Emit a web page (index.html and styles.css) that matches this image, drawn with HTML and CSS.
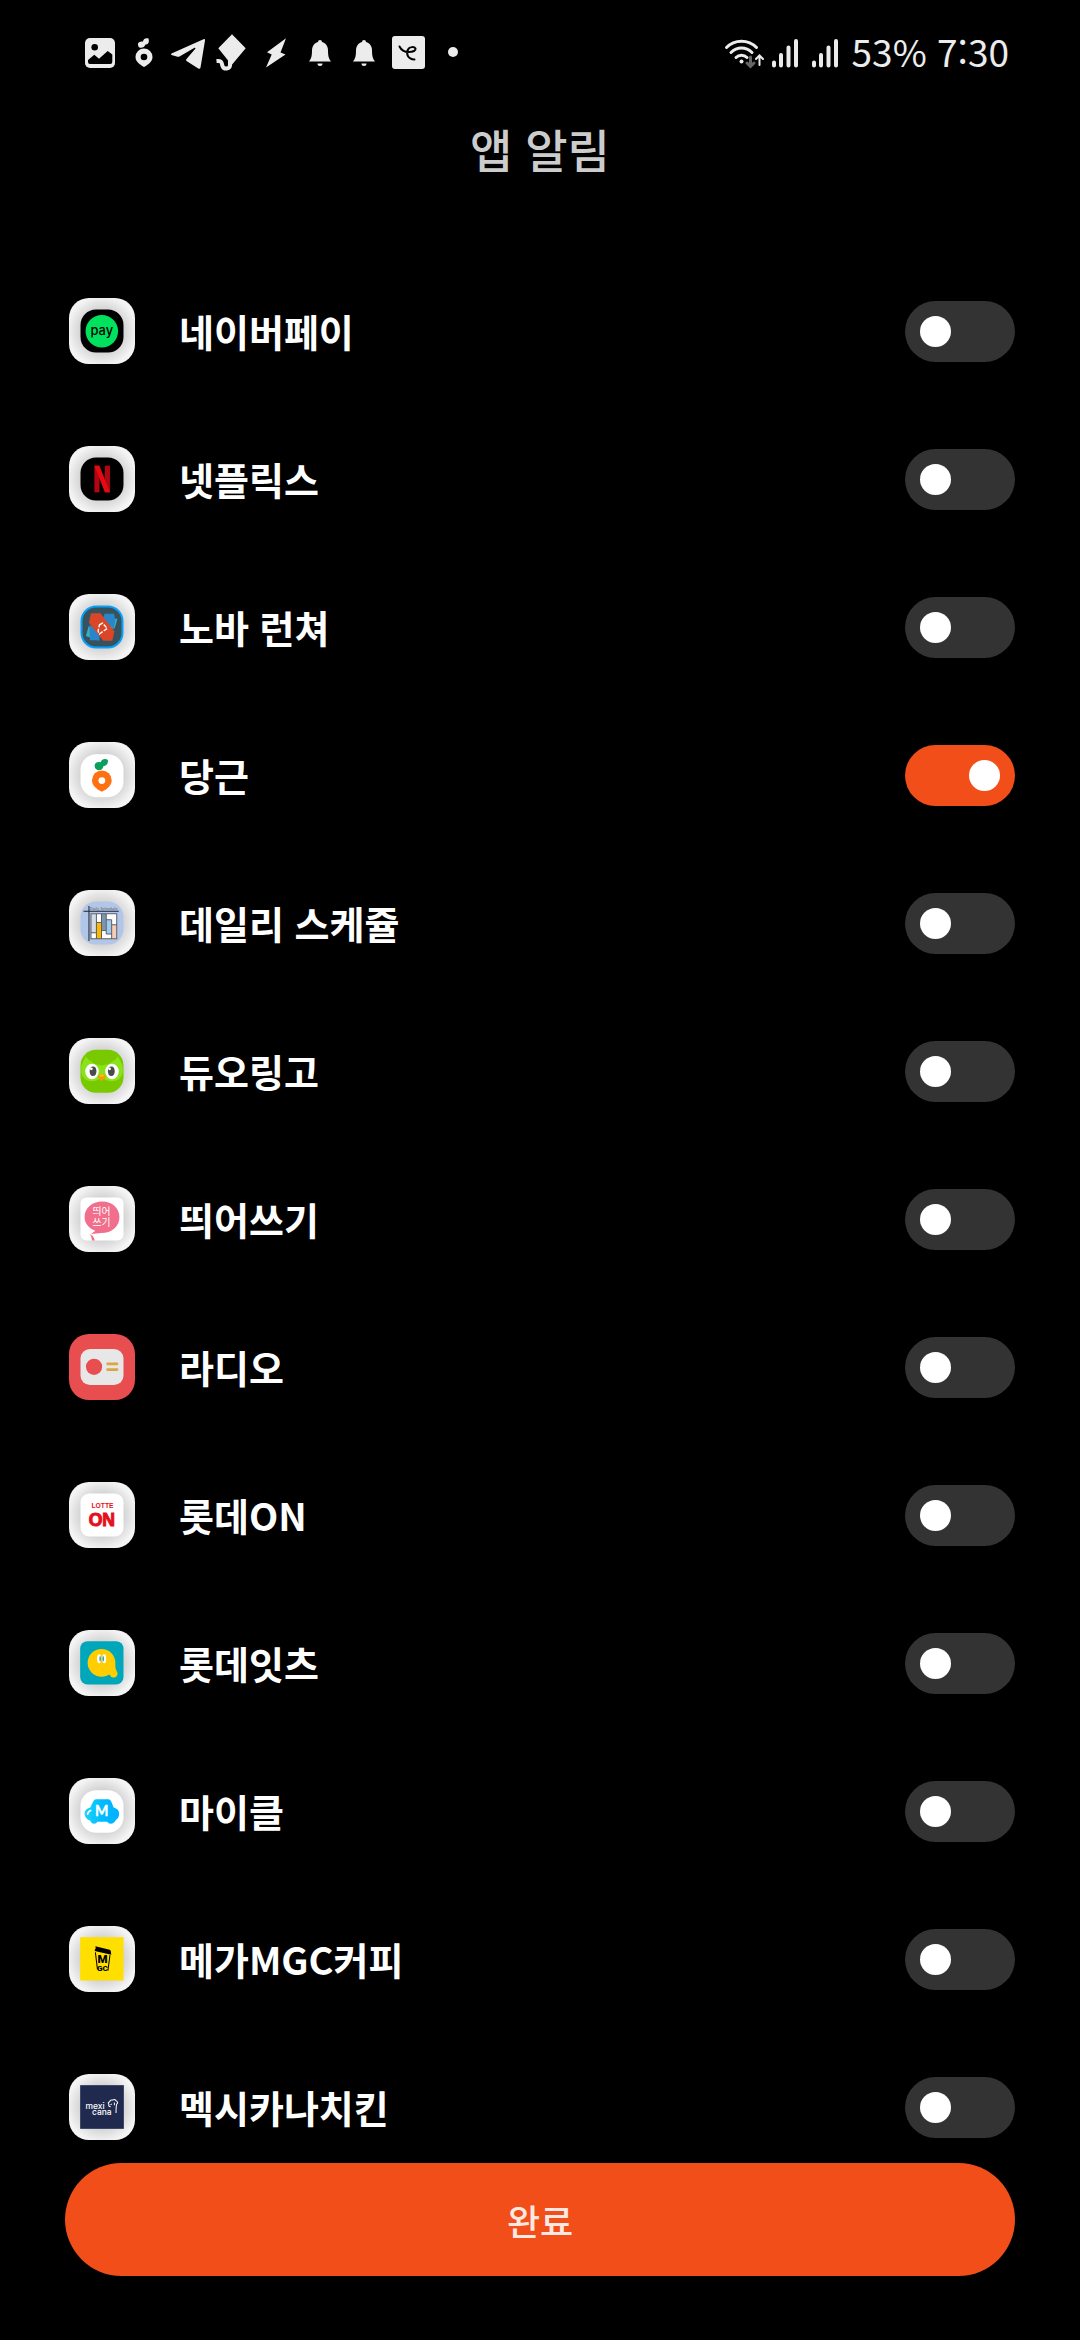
FILE: index.html
```html
<!DOCTYPE html>
<html lang="ko">
<head>
  <meta charset="utf-8">
  <title>앱 알림</title>
  <meta name="viewport" content="width=device-width, initial-scale=1">
  <link rel="stylesheet" href="styles.css">
</head>
<body>
  <div class="statusbar">
    <div class="notifications">
      <!-- gallery -->
      <svg viewBox="0 0 44 44"><rect x="7" y="7" width="30" height="30" rx="5"/><circle class="cut" cx="16.7" cy="16.3" r="3.3"/><path class="cut" d="M10 29 16.3 23.7 21 27.7 29.7 20 34.3 23.5V31q0 2-2 2H12q-2 0-2-2z"/></svg>
      <!-- carrot -->
      <svg viewBox="0 0 44 44"><path d="M22 36C17 33 13.5 30.5 13.5 26a8.500 8.500 0 0 1 17 0c0 4.500-3.500 7-8.500 10z"/><circle class="cut" cx="22" cy="26" r="3.300"/><path d="M16 14c-.5-3 3-4 5-3.500 0-3 3.500-4 5.500-3 1.500 5-1.500 6-3 6-1 3.500-7 5-7.500.5z"/></svg>
      <!-- telegram -->
      <svg viewBox="0 0 44 44"><path d="M5.500 22.500 37.500 8.200q1.800-.6 1.500 1.200L34.500 36.500q-.5 2-2.200 1L20.500 30q-1-1 0-2L29.500 17.500q0-1-1-.7L13.500 25.500q-1 .5-2 .2L5.500 24q-1-.7 0-1.500z"/></svg>
      <!-- kite -->
      <svg viewBox="0 0 44 44"><path d="M22 3.300 35.700 17.300 21.700 34 8.300 17.300z"/><path class="line" d="M6.500 30c6-.5 5 2 6 5 1.500 4 7 3 7.500-.5V28"/></svg>
      <!-- bolt -->
      <svg viewBox="0 0 44 44"><path d="M32 7.300 13 21.300 17.700 23.500 12 36.500 31.500 23.500 26.500 21.500z"/></svg>
      <!-- bell -->
      <svg viewBox="0 0 44 44"><path d="M20 11a2 2 0 0 1 4 0c4 1 6 4.500 6 8.500 0 5 .5 8 3 11H11c2.500-3 3-6 3-11 0-4 2-7.500 6-8.500zM19.500 32.500h5a2.500 2.500 0 0 1-5 0z"/></svg>
      <svg viewBox="0 0 44 44"><path d="M20 11a2 2 0 0 1 4 0c4 1 6 4.500 6 8.500 0 5 .5 8 3 11H11c2.500-3 3-6 3-11 0-4 2-7.500 6-8.500zM19.500 32.500h5a2.500 2.500 0 0 1-5 0z"/></svg>
      <!-- scribble -->
      <svg viewBox="0 0 44 44"><rect x="6" y="5" width="33" height="33" rx="3"/><path class="scribble" d="M13.500 15.500c2 4 5 5.500 9 5.500 5 0 7.500-1.500 7-3.500-1-2-6-2-7.500 1-2 4.500-.5 9.500 6.500 10"/></svg>
      <svg viewBox="0 0 44 44"><circle cx="23" cy="21" r="5"/></svg>
    </div>
    <div class="system">
      <svg class="wifi" viewBox="0 0 40 32"><path d="M2.500 10.500c8-8.500 22-8.500 30 0M7 15.500c6-6 15-6 21 0M12 20.500c3-3 8-3 11 0"/><circle cx="17.500" cy="24.500" r="2"/><path class="down" d="M26.500 20v9M23 26l3.500 3.500L30 26"/><path class="up" d="M35.500 28v-9M32 22l3.500-3.500L39 22"/></svg>
      <svg class="signal" viewBox="0 0 26 32"><path d="M2 25.500v3M9 18v10.500M16.500 10.500v18M24 4v24.500"/></svg>
      <svg class="signal" viewBox="0 0 26 32"><path d="M2 25.500v3M9 18v10.500M16.500 10.500v18M24 4v24.500"/></svg>
      <span class="clock">53% 7:30</span>
    </div>
  </div>

  <h1>앱 알림</h1>

  <div class="app-list">
    <div class="app">
      <svg class="app-icon" viewBox="0 0 195 195">
        <rect x="34" y="34" width="127" height="127" rx="46"/>
        <circle cx="97" cy="98" r="48" fill="#00e25e"/>
        <text class="pay" x="97" y="108">pay</text>
      </svg>
      <label for="naverpay">네이버페이</label>
      <input type="checkbox" id="naverpay">
    </div>
    <div class="app">
      <svg class="app-icon" viewBox="0 0 195 195">
        <rect x="34" y="34" width="127" height="127" rx="46"/>
        <rect x="75" y="58" width="15" height="79" fill="#b1060f"/>
        <rect x="106" y="58" width="15" height="79" fill="#b1060f"/>
        <path d="M75 58h15l31 79h-15z" fill="#e50914"/>
      </svg>
      <label for="netflix">넷플릭스</label>
      <input type="checkbox" id="netflix">
    </div>
    <div class="app">
      <svg class="app-icon" viewBox="0 0 195 195">
        <rect x="37" y="37" width="121" height="121" rx="43" fill="#36525f" stroke="#08a0f8" stroke-width="6"/>
        <path d="M110 73h33l-8 28-20 4zM58 95l25 10 5 33-38-14z" fill="#37b0bd"/>
        <path d="M105 58h28l4 20-5 25-32-28zM60 92l30 12v33H62z" fill="#2b86c9"/>
        <path d="M65 57h28l41 53-6 28h-27L59 85z" fill="#d94628"/>
        <path d="m90 91 9-5 14 16-9 6-14 10-4-8z" fill="none" stroke="#fff" stroke-width="4" stroke-dasharray="12 4"/>
      </svg>
      <label for="nova">노바 런쳐</label>
      <input type="checkbox" id="nova">
    </div>
    <div class="app">
      <svg class="app-icon" viewBox="0 0 195 195">
        <rect x="34" y="36" width="127" height="127" rx="46" fill="#fff"/>
        <path d="M97 147c-18-9-29-19-29-34a29 29 0 0 1 58 0c0 15-11 25-29 34z" fill="#ff7010"/>
        <circle cx="97" cy="114" r="10" fill="#fff"/>
        <path d="M76 73c-2-10 6-16 18-13 2-9 13-12 21-7 1 13-5 18-13 18-2 16-24 16-26 2z" fill="#0a9f5b"/>
      </svg>
      <label for="karrot">당근</label>
      <input type="checkbox" id="karrot" checked>
    </div>
    <div class="app">
      <svg class="app-icon" viewBox="0 0 195 195">
        <rect x="34" y="34" width="127" height="127" rx="46" fill="#b2c6e8"/>
        <text class="daily" x="103" y="58">Daily Schedule</text>
        <path d="M43 63h104M59 47v104" stroke="#1b2230" stroke-width="3"/>
        <rect x="65" y="70" width="76" height="74" fill="#fff"/>
        <rect x="65" y="70" width="15" height="56" fill="#d5dbe4"/>
        <rect x="81" y="96" width="15" height="48" fill="#fdb900"/>
        <rect x="96" y="70" width="14" height="48" fill="#7f94ae"/>
        <rect x="110" y="88" width="16" height="42" fill="#9ccbf2"/>
        <rect x="126" y="103" width="15" height="40" fill="#f8cbb4"/>
        <path d="M65 70h76v74H65zM81 70v74M96 70v74M110 70v60M126 88v56M65 126h16M81 96h15M96 120h14M110 88h16M110 130h16M126 103h15" fill="none" stroke="#5b5f66" stroke-width="3"/>
      </svg>
      <label for="daily">데일리 스케쥴</label>
      <input type="checkbox" id="daily">
    </div>
    <div class="app">
      <svg class="app-icon" viewBox="0 0 195 195">
        <rect x="34" y="35" width="127" height="127" rx="46" fill="#78c900"/>
        <path d="M36 82 50 54q6 14 22 16 20 3 25 14 5-11 25-14 16-2 22-16l15 28v20q-6 26-32 26-20 0-30-14-10 14-30 14-25 0-31-26z" fill="#8ae219"/>
        <path d="M64 66q6 14 33 14t33-14l-8-10H72z" fill="#78c900"/>
        <ellipse cx="68" cy="99" rx="20" ry="23" fill="#fff"/>
        <ellipse cx="127" cy="99" rx="20" ry="23" fill="#fff"/>
        <ellipse cx="71" cy="98" rx="10" ry="14" fill="#4b4b4b"/>
        <ellipse cx="125" cy="98" rx="10" ry="14" fill="#4b4b4b"/>
        <circle cx="66" cy="91" r="4" fill="#fff"/>
        <circle cx="120" cy="91" r="4" fill="#fff"/>
        <path d="M85 113q12-13 24 0 0 5-5 7-7 14-14 0-5-2-5-7z" fill="#f79a0a"/>
        <path d="M90 111q7-6 14 0-7 7-14 0z" fill="#ffc200"/>
      </svg>
      <label for="duolingo">듀오링고</label>
      <input type="checkbox" id="duolingo">
    </div>
    <div class="app">
      <svg class="app-icon" viewBox="0 0 195 195">
        <rect x="34" y="34" width="127" height="127" rx="18" fill="#fff"/>
        <path d="M98 46c30 0 51 20 51 46s-22 47-54 47c-10 0-18 3-30 3l13-10c-20-8-32-22-32-40 0-26 22-46 52-46z" fill="#f16f8d"/>
        <path d="M62 142q12 6 14 19h-8q0-8-6-19z" fill="#f16f8d"/>
        <text class="spacing" x="96" y="85">띄어</text>
        <text class="spacing" x="96" y="117">쓰기</text>
      </svg>
      <label for="spacing">띄어쓰기</label>
      <input type="checkbox" id="spacing">
    </div>
    <div class="app">
      <svg class="app-icon radio" viewBox="0 0 195 195">
        <rect x="34" y="44" width="127" height="107" rx="28" fill="#e7e7e7"/>
        <circle cx="74" cy="97" r="24" fill="#e84d50"/>
        <path d="M114 88h28M114 105h28" stroke="#dca544" stroke-width="8" stroke-linecap="round"/>
      </svg>
      <label for="radio">라디오</label>
      <input type="checkbox" id="radio">
    </div>
    <div class="app">
      <svg class="app-icon" viewBox="0 0 195 195">
        <rect x="34" y="34" width="127" height="127" rx="26" fill="#fff"/>
        <text class="lotte" x="99" y="78">LOTTE</text>
        <text class="lotte-on" x="97" y="129">ON</text>
      </svg>
      <label for="lotteon">롯데ON</label>
      <input type="checkbox" id="lotteon">
    </div>
    <div class="app">
      <svg class="app-icon" viewBox="0 0 195 195">
        <rect x="33" y="33" width="128" height="128" rx="22" fill="#00a6b9"/>
        <circle cx="96" cy="97" r="41" fill="#ffcd00"/>
        <path d="M124 90q13 4 13 14-1 9 3 16 4 6 3 12-3 10-13 8-6 0-10-8l-20-10z" fill="#ffcd00"/>
        <ellipse cx="89" cy="85" rx="6" ry="13" fill="#fff"/>
        <ellipse cx="104" cy="85" rx="6" ry="13" fill="#fff"/>
        <ellipse cx="92" cy="85" rx="2" ry="8" fill="#0093a6"/>
        <ellipse cx="101" cy="85" rx="2" ry="8" fill="#0093a6"/>
      </svg>
      <label for="lotteeatz">롯데잇츠</label>
      <input type="checkbox" id="lotteeatz">
    </div>
    <div class="app">
      <svg class="app-icon" viewBox="0 0 195 195">
        <defs>
          <linearGradient id="car">
            <stop offset="0" stop-color="#20d2fb"/>
            <stop offset="0.5" stop-color="#00bcff"/>
            <stop offset="1" stop-color="#00b0ff"/>
          </linearGradient>
        </defs>
        <rect x="34" y="36" width="127" height="126" rx="46" fill="#fff"/>
        <path d="M80 63h36q6 0 9 7l7 17q16 4 16 18 0 14-10 19-5 11-15 11-7 0-10-6H84q-3 6-10 6-8 0-11-9-17-6-17-21 0-14 17-18l8-17q3-7 9-7z" fill="url(#car)"/>
        <path d="M55 107q1-8 9-11" fill="none" stroke="#fff" stroke-width="5" stroke-linecap="round"/>
        <text class="mycle" x="97" y="111">M</text>
      </svg>
      <label for="mycle">마이클</label>
      <input type="checkbox" id="mycle">
    </div>
    <div class="app">
      <svg class="app-icon" viewBox="0 0 195 195">
        <rect x="33" y="33" width="128" height="128" fill="#ffdf00"/>
        <path d="m78 60 42 10q5 2 4 8l1 7-49-11q0-5 3-8z"/>
        <path d="m78 78 6 50M121 86l-6 46" stroke="#000" stroke-width="3"/>
        <text class="mega" x="99" y="110">M</text>
        <text class="mega small" x="99" y="134">GC</text>
      </svg>
      <label for="mega">메가MGC커피</label>
      <input type="checkbox" id="mega">
    </div>
    <div class="app">
      <svg class="app-icon" viewBox="0 0 195 195">
        <rect x="33" y="33" width="129" height="129" fill="#202a4e"/>
        <text class="mexicana" x="77" y="102">mexi</text>
        <text class="mexicana" x="97" y="121">cana</text>
        <path d="M123 97q-8-2-5-7-5-5 2-8 2-7 9-5 8-4 11 3 7 4 1 9-2 4-2 26M126 88l-3 3M134 84v8" fill="none" stroke="#fff" stroke-width="3"/>
      </svg>
      <label for="mexicana">멕시카나치킨</label>
      <input type="checkbox" id="mexicana">
    </div>
  </div>

  <div class="footer">
    <button type="button" class="done">완료</button>
  </div>
</body>
</html>
```
FILE: styles.css
```css
html {
  font-family: "Noto Sans CJK KR", "Noto Sans", sans-serif;
}
body {
  margin: 0;
  height: 100vh;
  display: flex;
  flex-direction: column;
  background-color: #000;
  color: #fff;
}

/* status bar */
.statusbar {
  display: flex;
  justify-content: space-between;
  align-items: center;
  height: 106px;
  padding: 0 71px 0 78px;
}
.notifications, .system {
  display: flex;
  align-items: center;
}
.notifications svg {
  width: 44px;
  height: 44px;
  fill: #ececec;
}
.notifications .cut {
  fill: #000;
}
.notifications .line {
  fill: none;
  stroke: #ececec;
  stroke-width: 4;
}
.notifications .scribble {
  fill: none;
  stroke: #000;
  stroke-width: 2;
  stroke-linecap: round;
}
.system {
  gap: 14px;
}
.wifi {
  width: 40px;
  height: 32px;
  margin-right: -6px;
  fill: none;
  stroke: #ececec;
  stroke-width: 3;
  stroke-linecap: round;
}
.wifi circle {
  fill: #ececec;
  stroke: none;
}
.wifi .down {
  stroke: #666;
}
.wifi .up {
  stroke-width: 2;
}
.signal {
  width: 26px;
  height: 32px;
  stroke: #ececec;
  stroke-width: 4;
  stroke-linecap: round;
}
.clock {
  padding-bottom: 4px;
  font-size: 37px;
  line-height: 52px;
  color: #ececec;
}

h1 {
  margin: 0;
  height: 151px;
  font-size: 46px;
  line-height: 84px;
  font-weight: 500;
  text-align: center;
  color: #ccc;
}

/* app list */
.app-list {
  flex: 1;
  min-height: 0;
  overflow-y: auto;
  scrollbar-width: none;
}
.app {
  display: flex;
  align-items: center;
  height: 148px;
  padding: 0 65px 0 69px;
}
.app-icon {
  width: 66px;
  height: 66px;
  border-radius: 20px;
  background: radial-gradient(circle, #c8c8c8 35%, #f4f4f4 75%);
}
.app-icon.radio {
  background: #e84d50;
}
.app label {
  flex: 1;
  padding-left: 44px;
  font-size: 38px;
  line-height: 56px;
  font-weight: bold;
}
.app input {
  appearance: none;
  display: flex;
  align-items: center;
  box-sizing: border-box;
  width: 110px;
  height: 61px;
  margin: 0;
  padding: 0 15px;
  border-radius: 31px;
  background-color: #333;
}
.app input::before {
  content: "";
  width: 31px;
  height: 31px;
  border-radius: 50%;
  background-color: #fff;
}
.app input:checked {
  justify-content: flex-end;
  background-color: #f24e1a;
}

/* lettering inside the app icons */
.app-icon text {
  text-anchor: middle;
}
.pay {
  font: 500 38px Inter, sans-serif;
}
.daily {
  font: 12px "Open Sans", sans-serif;
  fill: #555;
}
.spacing {
  font-size: 29px;
  fill: #fff;
}
.lotte, .lotte-on {
  font: bold 20px "Liberation Sans", sans-serif;
  fill: #e60f20;
}
.lotte-on {
  font-size: 52px;
  stroke: #e60f20;
  stroke-width: 3;
}
.mycle {
  font: bold 42px Lato, sans-serif;
  fill: #fff;
  stroke: #fff;
  stroke-width: 1;
  stroke-linejoin: round;
}
.mega {
  font: 900 34px Roboto, sans-serif;
}
.mega.small {
  font-size: 24px;
}
.mexicana {
  font: 500 25px Inter, sans-serif;
  fill: #fff;
}

.footer {
  padding: 0 65px 64px;
}
.done {
  display: block;
  width: 100%;
  height: 113px;
  border: 0;
  border-radius: 57px;
  background-color: #f24e1a;
  color: #fee9e2;
  font-family: inherit;
  font-size: 36px;
  font-weight: 500;
}
```
